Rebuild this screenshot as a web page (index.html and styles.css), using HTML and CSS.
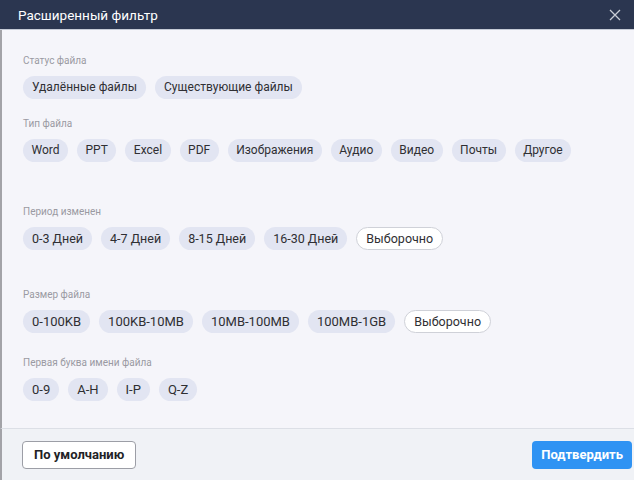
FILE: index.html
```html
<!DOCTYPE html>
<html lang="ru">

<head>
    <meta charset="UTF-8">
    <meta name="viewport" content="width=device-width, initial-scale=1.0">
    <title>Расширенный фильтр</title>
    <link rel="stylesheet" href="styles.css">
</head>

<body>

    <div class="dialog">
        <div class="dialog-header">
            <span class="dialog-title">Расширенный фильтр</span>
            <button class="close-btn" title="Закрыть">
                <svg width="12" height="12" viewBox="0 0 12 12">
                    <path d="M1 1 L11 11 M11 1 L1 11" stroke="#c9cdd6" stroke-width="1.3" fill="none" />
                </svg>
            </button>
        </div>

        <div class="dialog-body">
            <!-- file status -->
            <div class="filter-group">
                <div class="filter-label">Статус файла</div>
                <div class="chips">
                    <span class="chip">Удалённые файлы</span>
                    <span class="chip">Существующие файлы</span>
                </div>
            </div>

            <!-- file type -->
            <div class="filter-group group-type">
                <div class="filter-label">Тип файла</div>
                <div class="chips">
                    <span class="chip">Word</span>
                    <span class="chip">PPT</span>
                    <span class="chip">Excel</span>
                    <span class="chip">PDF</span>
                    <span class="chip">Изображения</span>
                    <span class="chip">Аудио</span>
                    <span class="chip">Видео</span>
                    <span class="chip">Почты</span>
                    <span class="chip">Другое</span>
                </div>
            </div>

            <!-- modified period -->
            <div class="filter-group group-period">
                <div class="filter-label">Период изменен</div>
                <div class="chips">
                    <span class="chip">0-3 Дней</span>
                    <span class="chip">4-7 Дней</span>
                    <span class="chip">8-15 Дней</span>
                    <span class="chip">16-30 Дней</span>
                    <span class="chip chip-custom">Выборочно</span>
                </div>
            </div>

            <!-- file size -->
            <div class="filter-group group-size">
                <div class="filter-label">Размер файла</div>
                <div class="chips">
                    <span class="chip">0-100KB</span>
                    <span class="chip">100KB-10MB</span>
                    <span class="chip">10MB-100MB</span>
                    <span class="chip">100MB-1GB</span>
                    <span class="chip chip-custom">Выборочно</span>
                </div>
            </div>

            <!-- first letter -->
            <div class="filter-group group-letter">
                <div class="filter-label">Первая буква имени файла</div>
                <div class="chips">
                    <span class="chip">0-9</span>
                    <span class="chip">A-H</span>
                    <span class="chip">I-P</span>
                    <span class="chip">Q-Z</span>
                </div>
            </div>
        </div>

        <div class="dialog-footer">
            <button class="btn btn-default">По умолчанию</button>
            <button class="btn btn-primary">Подтвердить</button>
        </div>
    </div>

</body>

</html>
```

FILE: styles.css
```css
body {
    margin: 0;
    background-color: #ffffff;
    font-family: Roboto, 'Noto Sans', sans-serif;
}

.dialog {
    width: 634px;
    height: 480px;
    display: flex;
    flex-direction: column;
    background-color: #f5f5fa;
}

.dialog-header {
    height: 29px;
    background-color: #2b3650;
    border-bottom: 1px solid #c5cad6;
    display: flex;
    align-items: center;
    justify-content: space-between;
    padding: 0 12px 0 18px;
    flex-shrink: 0;
}

.dialog-title {
    color: #ffffff;
    font-size: 13.5px;
}

.close-btn {
    background: none;
    border: none;
    padding: 0;
    width: 14px;
    height: 14px;
    display: flex;
    align-items: center;
    justify-content: center;
    cursor: pointer;
}

.dialog-body {
    flex: 1;
    border-left: 2px solid #a3a3a8;
    padding: 24px 0 0 21px;
}

.filter-group {
    margin-bottom: 18px;
}

.group-type {
    margin-bottom: 43px;
}

.group-period {
    margin-bottom: 38px;
}

.group-size {
    margin-bottom: 23px;
}

.filter-label {
    font-size: 10px;
    line-height: 14px;
    color: #9a9aa2;
    margin-bottom: 8px;
}

.chips {
    display: flex;
    flex-wrap: wrap;
    gap: 9px;
}

.chip {
    height: 23px;
    line-height: 23px;
    padding: 0 9px;
    border-radius: 12px;
    background-color: #e2e5f2;
    color: #2f2f33;
    font-size: 12px;
    white-space: nowrap;
}

.group-type .chip {
    padding: 0 8.5px;
}

.group-period .chip {
    font-size: 12.5px;
}

.group-size .chip,
.group-letter .chip {
    font-size: 13px;
}

.group-size .chip-custom {
    font-size: 12.5px;
}

.chip-custom {
    background-color: #ffffff;
    border: 1px solid #cfd1d8;
    height: 21px;
    line-height: 21px;
}

.dialog-footer {
    height: 51px;
    flex-shrink: 0;
    background-color: #f0f2f6;
    border-top: 1px solid #dcdfe6;
    border-left: 2px solid #a3a3a8;
    display: flex;
    align-items: center;
    justify-content: space-between;
    padding: 0 2px 0 20px;
}

.btn {
    height: 28px;
    border-radius: 4px;
    font-family: Roboto, 'Noto Sans', sans-serif;
    font-size: 13px;
    font-weight: bold;
    cursor: pointer;
}

.btn-default {
    background-color: #ffffff;
    color: #222226;
    border: 1px solid #9c9ea6;
    padding: 0 11px;
}

.btn-primary {
    background-color: #2f93f3;
    color: #ffffff;
    border: none;
    padding: 0 9px;
}
```
